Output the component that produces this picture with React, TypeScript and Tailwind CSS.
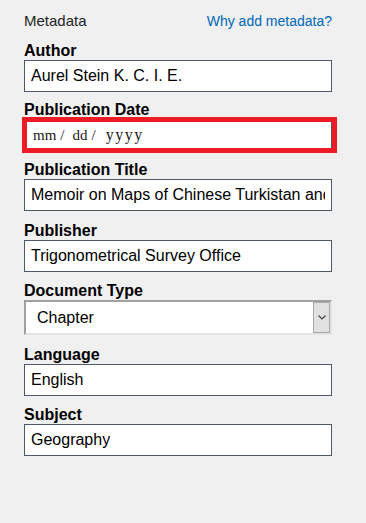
import React from 'react'

const Label: React.FC<{ text: string; className?: string }> = ({ text, className = '' }) => (
  <div className={`h-[18px] leading-[18px] text-[16px] font-bold text-black ${className}`}>{text}</div>
)

const Field: React.FC<{ value: string }> = ({ value }) => (
  <div className="h-8 border border-[#4f5965] bg-white flex items-center px-[6px] text-[16px] text-black">
    <div className="overflow-hidden whitespace-nowrap">{value}</div>
  </div>
)

const App: React.FC = () => {
  return (
    <div className="min-h-screen bg-[#f0f0f0] font-['Liberation_Sans',Arial,sans-serif]">
      <div className="w-[308px] ml-6 pt-[11px]">
        <div className="flex justify-between items-baseline h-5 leading-5">
          <span className="text-[15px] text-[#1e1e1e]">Metadata</span>
          <a className="text-[14px] text-[#0067b8] cursor-pointer">Why add metadata?</a>
        </div>

        <Label text="Author" className="mt-[11px]" />
        <Field value="Aurel Stein K. C. I. E." />

        <Label text="Publication Date" className="mt-[9px]" />
        <div className="relative">
          <div className="h-8 border border-[#4f5965] bg-white flex items-center pl-[8px] font-['Liberation_Serif','Times_New_Roman',serif] text-[#1a1a1a]">
            <div className="flex items-baseline">
              <span className="text-[15px]">mm</span>
              <span className="text-[15px] ml-[4px]">/</span>
              <span className="text-[15px] ml-[8px]">dd</span>
              <span className="text-[15px] ml-[4px]">/</span>
              <span className="text-[16px] ml-[10px] tracking-[1.5px]">yyyy</span>
            </div>
          </div>
          <div className="absolute -left-[2px] -top-[2px] w-[315px] h-[36px] border-[5px] border-[#ed1c24] pointer-events-none" />
        </div>

        <Label text="Publication Title" className="mt-[10px]" />
        <Field value="Memoir on Maps of Chinese Turkistan and Kansu" />

        <Label text="Publisher" className="mt-[11px]" />
        <Field value="Trigonometrical Survey Office" />

        <Label text="Document Type" className="mt-[10px]" />
        <div className="flex h-[35px] border-2 border-t-[#a0a0a0] border-l-[#a0a0a0] border-r-[#e3e3e3] border-b-[#e3e3e3] bg-white">
          <div className="flex-1 flex items-center pl-[11px] text-[16px] text-black">Chapter</div>
          <div className="w-[17px] h-full bg-[#e1e1e1] border border-[#a7a7a7] flex items-center justify-center">
            <svg width="8" height="5" viewBox="0 0 8 5" fill="none">
              <path d="M0.5 0.5L4 4L7.5 0.5" stroke="#444" strokeWidth="1.2" />
            </svg>
          </div>
        </div>

        <Label text="Language" className="mt-[11px]" />
        <Field value="English" />

        <Label text="Subject" className="mt-[10px]" />
        <Field value="Geography" />
      </div>
    </div>
  )
}

export default App
